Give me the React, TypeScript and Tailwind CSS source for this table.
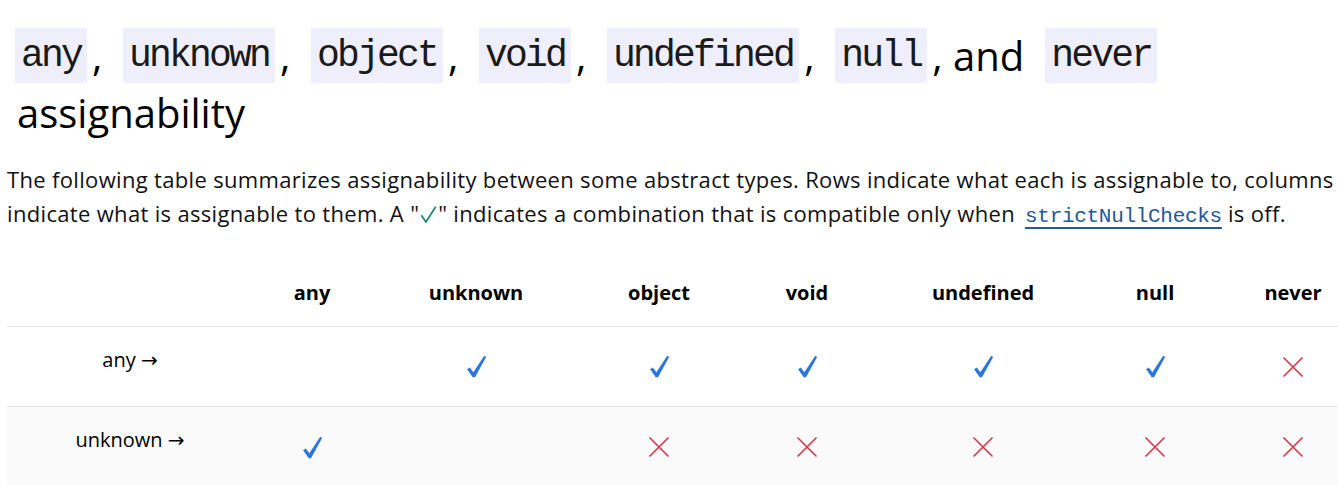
import React from 'react';

const sans = { fontFamily: '"Open Sans", "Noto Sans", sans-serif' };
const mono = { fontFamily: '"Liberation Mono", "DejaVu Sans Mono", monospace' };

const columns = ['any', 'unknown', 'object', 'void', 'undefined', 'null', 'never'];

// true = assignable, false = not, null = same type (blank)
const rows: { label: string; cells: (boolean | null)[] }[] = [
  { label: 'any', cells: [null, true, true, true, true, true, false] },
  { label: 'unknown', cells: [true, null, false, false, false, false, false] },
];

const Check = () => (
  <svg width="21" height="23" viewBox="0 0 20 22" className="block">
    <path d="M1 13.6 L3.6 12 L7 16.6 L17.4 0.8 L19.2 1.8 L8.6 21.2 L6.4 21.2 Z" fill="#2a76dc" />
  </svg>
);

const Cross = () => (
  <svg width="20" height="20" viewBox="0 0 20 20" className="block">
    <path d="M1 1 L19 19 M19 1 L1 19" stroke="#d23c4c" strokeWidth="1.7" strokeLinecap="round" />
  </svg>
);

const Code = ({ children }: { children: React.ReactNode }) => (
  <span
    className="inline-block h-[55px] leading-[55px] px-[6px] bg-[#efeffb] text-[38px] tracking-[-2.8px] text-[#1a1a1a]"
    style={mono}
  >
    {children}
  </span>
);

const Comma = () => <span className="inline-block w-[36px] pl-[5px]">,</span>;

export default function App() {
  return (
    <div className="w-[1338px] h-[485px] overflow-hidden bg-white text-black" style={sans}>
      <h1 className="pl-[15px] pt-[28px] text-[40px] font-normal">
        <div className="flex items-center h-[55px] whitespace-nowrap leading-none">
          <Code>any</Code>
          <Comma />
          <Code>unknown</Code>
          <Comma />
          <Code>object</Code>
          <Comma />
          <Code>void</Code>
          <Comma />
          <Code>undefined</Code>
          <Comma />
          <Code>null</Code>
          <span className="inline-block w-[118px] pl-[5px]">, and</span>
          <Code>never</Code>
        </div>
        <div className="mt-[6px] leading-[48px] pl-[2px]">assignability</div>
      </h1>

      <p className="pl-[7px] mt-[25px] text-[22px] tracking-[0.33px] leading-[34px] text-[#111] whitespace-nowrap">
        The following table summarizes assignability between some abstract types. Rows indicate what each is assignable to, columns
        <br />
        indicate what is assignable to them. A "
        <svg width="17" height="17" viewBox="0 0 16 16" className="inline-block align-[-1px] mx-[1px]">
          <path d="M1.2 8.6 L5.6 15 L14.8 0.8" stroke="#218674" strokeWidth="1.7" fill="none" />
        </svg>
        " indicates a combination that is compatible only when{' '}
        <a
          href="#"
          className="ml-[4px] text-[#245896] underline decoration-[1.5px] underline-offset-[5px] text-[21px] tracking-[-0.3px]"
          style={mono}
        >
          strictNullChecks
        </a>{' '}
        is off.
      </p>

      <div className="ml-[7px] mt-[27px] w-[1358px] text-[20px]">
        <div className="grid grid-cols-[246px_118px_210px_156px_140px_212px_132px_144px] h-[66px] items-center border-b border-[#e6e6e6]">
          <div />
          {columns.map((c) => (
            <div key={c} className="text-center font-bold -mt-[2px]">
              {c}
            </div>
          ))}
        </div>
        {rows.map((r, i) => (
          <div
            key={r.label}
            className={
              'grid grid-cols-[246px_118px_210px_156px_140px_212px_132px_144px] h-[80px] items-center ' +
              (i % 2 === 1 ? 'bg-[#fafafa]' : 'bg-white border-b border-[#e6e6e6]')
            }
          >
            <div className="text-center -mt-[14px]">
              {r.label}{' '}
              <span className="text-[20px]" style={{ fontFamily: '"DejaVu Sans", sans-serif' }}>
                →
              </span>
            </div>
            {r.cells.map((v, j) => (
              <div key={j} className="flex justify-center">
                {v === true && <Check />}
                {v === false && <Cross />}
              </div>
            ))}
          </div>
        ))}
      </div>
    </div>
  );
}
